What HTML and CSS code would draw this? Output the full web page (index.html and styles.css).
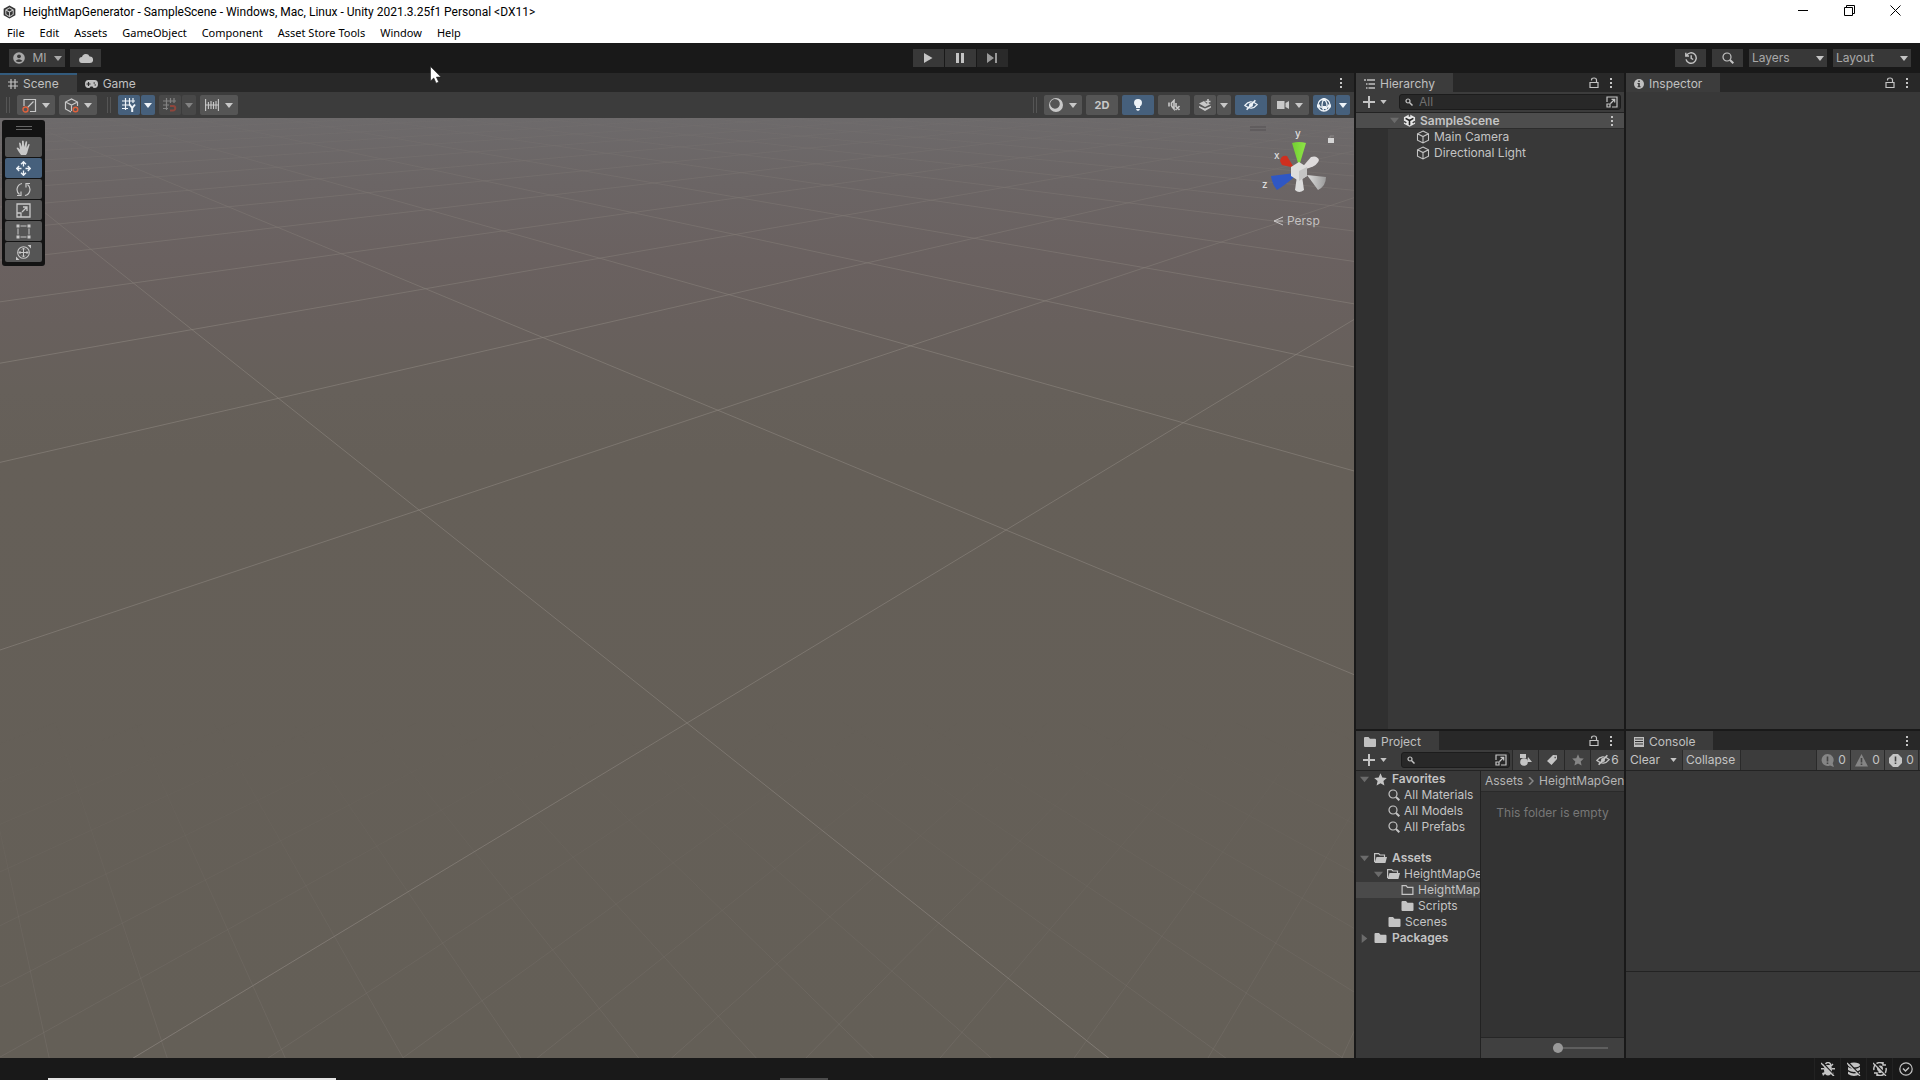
FILE: index.html
```html
<!DOCTYPE html>
<html lang="en">
<head>
<meta charset="utf-8">
<title>HeightMapGenerator - SampleScene</title>
<link rel="stylesheet" href="styles.css">
</head>
<body>
<svg class="sprite" aria-hidden="true">
  <symbol id="caret" viewBox="0 0 8 5"><path d="M0 0h8L4 5z" fill="currentColor"/></symbol>
  <symbol id="kebab" viewBox="0 0 4 12"><path d="M1 1h2v2H1zM1 5h2v2H1zM1 9h2v2H1z" fill="currentColor"/></symbol>
  <symbol id="lock" viewBox="0 0 10 12"><path d="M1 5.500h8v5H1zM2.500 3.500V3q0-2 2.500-2T7.500 3v2.500" fill="none" stroke="currentColor" stroke-width="1.200"/></symbol>
  <symbol id="cube" viewBox="0 0 14 14"><path d="M7 1l5.500 2.800v6.400L7 13l-5.500-2.800V3.800zM1.500 3.800L7 6.600l5.500-2.800M7 6.600V13" fill="none" stroke="currentColor" stroke-width="1.100"/></symbol>
  <symbol id="search" viewBox="0 0 12 12"><circle cx="5" cy="5" r="4" fill="none" stroke="currentColor" stroke-width="1.200"/><path d="M8 8l3.300 3.300" stroke="currentColor" stroke-width="2"/></symbol>
  <symbol id="mini-search" viewBox="0 0 8 8"><circle cx="3" cy="3" r="2" fill="none" stroke="currentColor" stroke-width="1.200"/><path d="M4.500 4.500l3 3" stroke="currentColor" stroke-width="1.500"/></symbol>
  <symbol id="plus" viewBox="0 0 12 12"><path d="M6 0v12M0 6h12" stroke="currentColor" stroke-width="2"/></symbol>
  <symbol id="pop" viewBox="0 0 12 12"><path d="M1 6V1h10v10H6M1 8h3v3H1zM4.500 7.500l4-4M5.500 3.300h3.200v3.200" fill="none" stroke="currentColor" stroke-width="1.200"/></symbol>
  <symbol id="folder" viewBox="0 0 12 10"><path d="M0 1q0-1 1-1h3.500L6 1.800h5q1 0 1 1V9q0 1-1 1H1q-1 0-1-1z" fill="currentColor"/></symbol>
  <symbol id="folder-line" viewBox="0 0 12 10"><path d="M.6.600h4L6 2.300h5.400v7H.600z" fill="none" stroke="currentColor" stroke-width="1.200"/></symbol>
  <symbol id="folder-open" viewBox="0 0 13 10"><path d="M.6 9V.6h4L6 2h4.500v2" fill="none" stroke="currentColor" stroke-width="1.200"/><path d="M2.500 4H13l-1.600 6H.6z" fill="currentColor"/></symbol>
  <symbol id="star" viewBox="0 0 12 12"><path d="M6 .3l1.700 3.900 4.100.4-3.100 2.800.9 4.200L6 9.400l-3.600 2.200.9-4.200L.2 4.600l4.100-.4z" fill="currentColor"/></symbol>
  <symbol id="eye-off" viewBox="0 0 16 12"><path d="M1 6.500Q7-1 15 5.500 9 13 1 6.500z" fill="none" stroke="currentColor" stroke-width="1.500"/><circle cx="8" cy="6" r="2.300" fill="currentColor"/><path d="M13 .5L3 11.500" stroke="currentColor" stroke-width="1.800"/></symbol>
  <symbol id="unity" viewBox="0 0 14 14"><path d="M7 .3l6 3.300v6.800l-6 3.300-6-3.300V3.600z" fill="#e6e6e6"/><path d="M7 7v5M7 7L2.800 4.700M7 7l4.200-2.300" fill="none" stroke="#222" stroke-width="1.700"/><path d="M7 0v3M1 8l2.600 1.500M13 8l-2.600 1.500" stroke="#444" stroke-width="1.700"/></symbol>
</svg>

<header class="titlebar">
  <div class="title-row">
    <svg class="app-icon" viewBox="0 0 14 14"><path d="M7 0l6.300 3.500v7L7 14 .7 10.500v-7z" fill="#333"/><path d="M7 7v5M7 7L3 4.700M7 7l4-2.300M3 9.500V5l4-2.500L11 5v4.500L7 12z" fill="none" stroke="#c8c8c8" stroke-width="1.100"/></svg>
    <h1>HeightMapGenerator - SampleScene - Windows, Mac, Linux - Unity 2021.3.25f1 Personal &lt;DX11&gt;</h1>
    <div class="window-buttons">
      <button aria-label="Minimize"><svg viewBox="0 0 11 11"><path d="M0 5.500h10" stroke="#000"/></svg></button>
      <button aria-label="Restore"><svg viewBox="0 0 11 11"><path d="M.5 2.500h8v8h-8zM2.500 2V.5h8v8H9" fill="none" stroke="#000"/></svg></button>
      <button aria-label="Close"><svg viewBox="0 0 11 11"><path d="M.5.500l10 10M10.500.500l-10 10" stroke="#000"/></svg></button>
    </div>
  </div>
  <nav class="menu">
    <button>File</button><button>Edit</button><button>Assets</button><button>GameObject</button><button>Component</button><button>Asset Store Tools</button><button>Window</button><button>Help</button>
  </nav>
</header>

<div class="main-toolbar">
  <div class="side">
    <button class="tool account"><svg class="i12" viewBox="0 0 12 12"><circle cx="6" cy="6" r="5.800" fill="currentColor"/><circle cx="6" cy="4.300" r="1.900" fill="#383838"/><path d="M2.500 9q3.500-3.500 7 0-3.500 2-7 0z" fill="#383838"/></svg><span>MI</span><svg class="caret"><use href="#caret"/></svg></button>
    <button class="tool w31" aria-label="Cloud"><svg class="cloud" viewBox="0 0 14 10"><path d="M3.200 10a3 3 0 0 1-.2-6 4 4 0 0 1 7.600-.6A3.300 3.300 0 0 1 11 10z" fill="currentColor"/></svg></button>
  </div>
  <div class="play">
    <button class="tool" aria-label="Play"><svg class="i10" viewBox="0 0 10 10"><path d="M1 0l8.500 5L1 10z" fill="currentColor"/></svg></button>
    <button class="tool" aria-label="Pause"><svg class="i10" viewBox="0 0 10 10"><path d="M1 0h3v10H1zM6 0h3v10H6z" fill="currentColor"/></svg></button>
    <button class="tool off" aria-label="Step" disabled><svg class="i10" viewBox="0 0 10 10"><path d="M0 0l7 5-7 5zM8 0h2v10H8z" fill="currentColor"/></svg></button>
  </div>
  <div class="side end">
    <button class="tool w31" aria-label="Undo history"><svg class="i12" viewBox="0 0 12 12"><path d="M1.500 3.500A5.200 5.200 0 1 1 1 7.300M.8.800v3.200H4M6.200 3.300v3l2 1.200" fill="none" stroke="currentColor" stroke-width="1.400"/></svg></button>
    <button class="tool w31" aria-label="Search"><svg class="i12"><use href="#search"/></svg></button>
    <label class="pick"><select aria-label="Layers"><option>Layers</option></select><svg class="caret"><use href="#caret"/></svg></label>
    <label class="pick"><select aria-label="Layout"><option>Layout</option></select><svg class="caret"><use href="#caret"/></svg></label>
  </div>
</div>

<main class="workspace">
  <section class="scene panel">
    <div class="tabs">
      <button class="tab active focused"><svg class="i10" viewBox="0 0 10 10"><path d="M3 0v10M7 0v10M0 3h10M0 7h10" stroke="currentColor" stroke-width="1.200"/></svg>Scene</button>
      <button class="tab"><svg class="pad" viewBox="0 0 13 8"><path d="M3.500 0h6a3.500 4 0 0 1 0 8Q8 8 7.500 6.500h-2Q5 8 3.500 8a3.500 4 0 0 1 0-8z" fill="currentColor"/><path d="M3.500 2v4M1.500 4h4M8.500 3h1.500M9.500 5H11" stroke="#282828" stroke-width="1.200"/></svg>Game</button>
      <button class="icon-btn push" aria-label="More"><svg class="kebab"><use href="#kebab"/></svg></button>
    </div>
    <div class="scene-toolbar">
      <span class="grip"></span>
      <button class="sbtn w38" aria-label="Pivot"><svg class="i15" viewBox="0 0 15 15"><path d="M2 8V1.500h11.500V13.500H8M5 10L11.500 3.500" fill="none" stroke="currentColor" stroke-width="1.200"/><circle cx="3.500" cy="11.500" r="2.500" fill="none" stroke="#e0623d" stroke-width="1.400"/></svg><svg class="caret"><use href="#caret"/></svg></button>
      <button class="sbtn w38" aria-label="Handle space"><svg class="i15" viewBox="0 0 15 15"><path d="M7 14l-5.500-3V4L7.500 1l6 3v4M1.500 4l6 3 6-3M7.500 7v6" fill="none" stroke="currentColor" stroke-width="1.200"/><circle cx="11.500" cy="11.500" r="2.300" fill="none" stroke="#e0623d" stroke-width="1.400"/></svg><svg class="caret"><use href="#caret"/></svg></button>
      <span class="grip second"></span>
      <span class="split"><button class="sbtn on w22" aria-label="Grid"><svg class="i14" viewBox="0 0 14 14"><path d="M3.500 0v12M7.500 0v7M11 0v5M0 3h13M0 7h8M0 10.500h6" stroke="currentColor" stroke-width="1.200"/><path d="M7.500 6.500l2.700 3.500v4M13 6.500L10.200 10" fill="none" stroke="currentColor" stroke-width="2"/></svg></button><button class="sbtn on w14" aria-label="Grid options"><svg class="caret"><use href="#caret"/></svg></button></span>
      <span class="split dim"><button class="sbtn w22" aria-label="Snap"><svg class="i14" viewBox="0 0 14 14"><path d="M3.500 0v12M7.500 0v5M11 0v5M0 3h13M0 7h6M0 10.500h5" stroke="currentColor" stroke-width="1.200"/><path d="M7 8h3a2 2 0 0 1 0 4.500H7" fill="none" stroke="#e0513d" stroke-width="2"/></svg></button><button class="sbtn w14" aria-label="Snap options"><svg class="caret"><use href="#caret"/></svg></button></span>
      <button class="sbtn w38" aria-label="Snap increment"><svg class="i14" viewBox="0 0 14 14"><path d="M.6 1v12M3.400 4v7M6 3v8M8.500 4v7M11 3v8M13.400 1v12M0 7h14" stroke="currentColor" stroke-width="1.100"/></svg><svg class="caret"><use href="#caret"/></svg></button>
      <span class="grip push"></span>
      <button class="sbtn w38" aria-label="Draw mode"><svg class="i14" viewBox="0 0 14 14"><path d="M7 0a7 7 0 1 0 0 14A7 7 0 0 0 7 0zM8 1.500A4.800 4.800 0 1 1 2 8.500 4.800 4.800 0 0 1 8 1.500z" fill="currentColor" fill-rule="evenodd"/></svg><svg class="caret"><use href="#caret"/></svg></button>
      <button class="sbtn w32 bold">2D</button>
      <button class="sbtn on w32" aria-label="Lighting"><svg class="i12" viewBox="0 0 12 12"><path d="M6 0a4 4 0 0 1 4 4q0 2-2 3.500V9H4V7.500Q2 6 2 4a4 4 0 0 1 4-4zM4.300 10h3.400v1L6 12l-1.700-1z" fill="currentColor"/></svg></button>
      <button class="sbtn w32" aria-label="Audio"><svg class="i12" viewBox="0 0 12 12"><path d="M1 3.500v4M3.500 7V4L6 1.500V10L3.500 7M8 4v3M7.500 7l4 4M11.500 7l-4 4" fill="none" stroke="currentColor" stroke-width="1.600"/></svg></button>
      <span class="split"><button class="sbtn w22" aria-label="Effects"><svg class="i12" viewBox="0 0 12 12"><path d="M0 4.500L5 2l2.500 2.500L12 5 6 8zM0 7l6 2.500L12 7v1.500L6 12 0 8.500z" fill="currentColor"/><path d="M9 0v5M6.500 2.500h5" stroke="currentColor" stroke-width="1.600"/></svg></button><button class="sbtn w14" aria-label="Effect options"><svg class="caret"><use href="#caret"/></svg></button></span>
      <button class="sbtn on w32" aria-label="Hidden objects"><svg class="eye"><use href="#eye-off"/></svg></button>
      <button class="sbtn w38" aria-label="Camera"><svg class="i12" viewBox="0 0 12 12"><path d="M0 2h7.500v8H0zM8.500 4L12 2v8L8.500 8z" fill="currentColor"/></svg><svg class="caret"><use href="#caret"/></svg></button>
      <span class="split"><button class="sbtn on w22" aria-label="Gizmos"><svg class="i14" viewBox="0 0 14 14"><circle cx="7" cy="7" r="6" fill="none" stroke="currentColor" stroke-width="1.300"/><path d="M7 1q-4 6 0 12M7 1q5 5 2 11M1 8q6 3 12 0" fill="none" stroke="currentColor" stroke-width="1.200"/><path d="M5.500 0h3v3h-3zM0 6.500h3v3H0zM11 6.500h3v3h-3zM6 8h3v3H6z" fill="currentColor"/></svg></button><button class="sbtn on w14" aria-label="Gizmo options"><svg class="caret"><use href="#caret"/></svg></button></span>
    </div>
    <div class="viewport">
      <svg class="grid" id="grid" viewBox="0 118 1354 940" preserveAspectRatio="xMinYMin slice">
        <defs>
          <linearGradient id="far" gradientUnits="userSpaceOnUse" x1="0" y1="118" x2="0" y2="340"><stop offset="0" stop-color="#fff" stop-opacity=".1"/><stop offset=".4" stop-color="#fff" stop-opacity=".55"/><stop offset="1" stop-color="#fff"/></linearGradient>
          <linearGradient id="near" gradientUnits="userSpaceOnUse" x1="0" y1="720" x2="0" y2="1058"><stop offset="0" stop-color="#fff" stop-opacity="0"/><stop offset="1" stop-color="#fff"/></linearGradient>
          <mask id="far-mask" maskUnits="userSpaceOnUse" x="0" y="118" width="1354" height="940"><rect y="118" width="1354" height="940" fill="url(#far)"/></mask>
          <mask id="near-mask" maskUnits="userSpaceOnUse" x="0" y="118" width="1354" height="940"><rect y="720" width="1354" height="338" fill="url(#near)"/></mask>
        </defs>
        <g mask="url(#far-mask)"><path id="major" class="major"/></g>
        <g mask="url(#near-mask)"><path id="minor" class="minor"/></g>
      </svg>
      <div class="toolbox">
        <span class="handle"></span>
        <button class="sbtn" aria-label="Hand"><svg class="i15" viewBox="0 0 15 15"><path d="M5 15Q2 11 .5 8q1-1 2 0L4 9.500 3 3q.8-1 1.500 0L6 7 6 1q.9-1 1.700 0L8.200 7 9.700 1.500q1-.8 1.500.2L10.500 8l2-4q1-.4 1.200.6L12 10q-.5 3-2 5z" fill="currentColor"/></svg></button>
        <button class="sbtn on" aria-label="Move"><svg class="i15" viewBox="0 0 15 15"><path d="M7.500 1v4.500M7.500 9.500V14M1 7.500h4.500M9.500 7.500H14M5 3.200L7.500.700 10 3.200M5 11.800l2.500 2.500 2.500-2.500M3.200 5L.7 7.500 3.200 10M11.800 5l2.500 2.500-2.500 2.500" fill="none" stroke="currentColor" stroke-width="1.300"/></svg></button>
        <button class="sbtn" aria-label="Rotate"><svg class="i15" viewBox="0 0 15 15"><path d="M6 1.500A6.200 6.200 0 0 0 3.500 12.500M1 13.500h4V9.500M9 13.500A6.200 6.200 0 0 0 11.500 2.500M14 1.500h-4v4" fill="none" stroke="currentColor" stroke-width="1.200"/></svg></button>
        <button class="sbtn" aria-label="Scale"><svg class="i15" viewBox="0 0 15 15"><path d="M1 1h13v13H1zM1 10h4v4M6 9l4.500-4.500M7 4h4v4" fill="none" stroke="currentColor" stroke-width="1.300"/></svg></button>
        <button class="sbtn" aria-label="Rect"><svg class="i15" viewBox="0 0 15 15"><path d="M2 4.500v6M13 4.500v6M4.500 2h6M4.500 13h6" stroke="currentColor"/><path d="M.5.500h3v3h-3zM11.500.5h3v3h-3zM.5 11.500h3v3h-3zM11.500 11.500h3v3h-3z" fill="currentColor"/></svg></button>
        <button class="sbtn" aria-label="Transform"><svg class="i15" viewBox="0 0 15 15"><circle cx="7.500" cy="7.500" r="5.800" fill="none" stroke="currentColor" stroke-width="1.100"/><path d="M7.500 3v9M3 7.500h9M6 4.500l1.500-1.500L9 4.500M6 10.500L7.500 12 9 10.500M4.500 6L3 7.500 4.500 9M10.500 6L12 7.500 10.500 9" fill="none" stroke="currentColor" stroke-width="1"/><path d="M11.500 0H15v3.500zM0 11.500V15h3.500z" fill="currentColor"/></svg></button>
      </div>
      <div class="orientation">
        <svg viewBox="0 0 96 116" role="img" aria-label="Scene orientation">
          <defs>
            <linearGradient id="cone-g"><stop offset="0" stop-color="#73cf31"/><stop offset="1" stop-color="#8ee548"/></linearGradient>
            <linearGradient id="cone-w"><stop offset="0" stop-color="#ddd"/><stop offset="1" stop-color="#999"/></linearGradient>
          </defs>
          <path d="M0 2h16M0 5h16" stroke="#555152"/>
          <path d="M43 41l-6-10q-6-1-7 5l2 4 9 2z" fill="#cf2f1f"/>
          <path d="M49 46l12-14q6-2 8 3-1 5-10 8z" fill="#dedbdc"/>
          <path d="M57 50l19 2q0 9-8 13z" fill="url(#cone-w)"/>
          <path d="M45 48L21 51q1 8 6 14 11-7 18-14z" fill="#2f57c4"/>
          <path d="M47 51h5l2 14q-5 4-9 0z" fill="#dcdcdc"/>
          <path d="M42 18q7-2 14 0l-6 20h-2z" fill="url(#cone-g)"/>
          <path d="M49 37l8 5v9l-8 5-8-5v-9z" fill="#ddd"/><path d="M49 46l8-4v9l-8 5z" fill="#c5c5c5"/>
          <path d="M78 13h6v5h-6z" fill="#d5d5d5"/><path d="M80 13v-2h4" stroke="#8b8888" fill="none"/>
          <path d="M33 92l-9 4 9 4M24 96h9" fill="none" stroke="#c9c6c6"/>
          <text x="45" y="12">y</text><text x="24" y="34">x</text><text x="12" y="63">z</text>
          <text class="persp" x="37" y="100">Persp</text>
        </svg>
      </div>
    </div>
  </section>

  <section class="hierarchy panel">
    <div class="tabs">
      <button class="tab active"><svg class="i11" viewBox="0 0 11 10"><path d="M0 1h2M3 1h8M2 5h1.500M4.500 5H11M2 9h1.500M4.500 9H11" stroke="currentColor" stroke-width="1.300"/></svg>Hierarchy</button>
      <button class="icon-btn push" aria-label="Lock"><svg class="lock"><use href="#lock"/></svg></button>
      <button class="icon-btn" aria-label="More"><svg class="kebab"><use href="#kebab"/></svg></button>
    </div>
    <div class="panel-toolbar">
      <button class="add" aria-label="Add"><svg class="i12"><use href="#plus"/></svg><svg class="caret small"><use href="#caret"/></svg></button>
      <label class="search wide"><svg class="i8"><use href="#mini-search"/></svg><input type="text" placeholder="All" aria-label="Search hierarchy"><svg class="i12"><use href="#pop"/></svg></label>
    </div>
    <ul class="objects">
      <li class="root"><svg class="fold"><use href="#caret"/></svg><svg class="i13"><use href="#unity"/></svg><b>SampleScene</b><button class="icon-btn push" aria-label="Scene menu"><svg class="kebab"><use href="#kebab"/></svg></button></li>
      <li><svg class="i14"><use href="#cube"/></svg>Main Camera</li>
      <li><svg class="i14"><use href="#cube"/></svg>Directional Light</li>
    </ul>
  </section>

  <section class="inspector panel">
    <div class="tabs">
      <button class="tab active"><svg class="i10" viewBox="0 0 10 10"><circle cx="5" cy="5" r="5" fill="currentColor"/><path d="M4.200 1.500h1.600v1.600H4.200zM3.500 4h2.300v3.200h.8v1H3.500v-1h.7V5h-.7z" fill="#383838"/></svg>Inspector</button>
      <button class="icon-btn push" aria-label="Lock"><svg class="lock"><use href="#lock"/></svg></button>
      <button class="icon-btn" aria-label="More"><svg class="kebab"><use href="#kebab"/></svg></button>
    </div>
  </section>

  <section class="project panel">
    <div class="tabs">
      <button class="tab active"><svg class="folder"><use href="#folder"/></svg>Project</button>
      <button class="icon-btn push" aria-label="Lock"><svg class="lock"><use href="#lock"/></svg></button>
      <button class="icon-btn" aria-label="More"><svg class="kebab"><use href="#kebab"/></svg></button>
    </div>
    <div class="panel-toolbar">
      <button class="add" aria-label="Add"><svg class="i12"><use href="#plus"/></svg><svg class="caret small"><use href="#caret"/></svg></button>
      <label class="search"><svg class="i8"><use href="#mini-search"/></svg><input type="text" aria-label="Search project"><svg class="i12"><use href="#pop"/></svg></label>
      <button class="seg" aria-label="Filter by type"><svg class="i12" viewBox="0 0 12 12"><path d="M0 0h6v4H0zM8 3l4 5H7z" fill="currentColor"/><circle cx="4" cy="8" r="3.800" fill="currentColor"/></svg></button>
      <button class="seg" aria-label="Filter by label"><svg class="i10" viewBox="0 0 10 10"><path d="M6 0l4 .2V4L4.500 10 0 6zM7.500 1.700v1.500h1.300V1.700z" fill="currentColor" fill-rule="evenodd"/></svg></button>
      <button class="seg faded" aria-label="Favorite"><svg class="i12"><use href="#star"/></svg></button>
      <button class="seg last" aria-label="Hidden packages"><svg class="eye"><use href="#eye-off"/></svg>6</button>
    </div>
    <div class="project-body">
      <ul class="tree">
        <li><svg class="fold"><use href="#caret"/></svg><svg class="i13"><use href="#star"/></svg><b>Favorites</b></li>
        <li class="l1"><svg class="i12"><use href="#search"/></svg>All Materials</li>
        <li class="l1"><svg class="i12"><use href="#search"/></svg>All Models</li>
        <li class="l1"><svg class="i12"><use href="#search"/></svg>All Prefabs</li>
        <li class="group"><svg class="fold"><use href="#caret"/></svg><svg class="folder"><use href="#folder-open"/></svg><b>Assets</b></li>
        <li class="l1 open"><svg class="fold"><use href="#caret"/></svg><svg class="folder"><use href="#folder-open"/></svg>HeightMapGenerator</li>
        <li class="l2 selected"><svg class="folder"><use href="#folder-line"/></svg>HeightMaps</li>
        <li class="l2"><svg class="folder"><use href="#folder"/></svg>Scripts</li>
        <li class="l1"><svg class="folder"><use href="#folder"/></svg>Scenes</li>
        <li><svg class="fold closed"><use href="#caret"/></svg><svg class="folder"><use href="#folder"/></svg><b>Packages</b></li>
      </ul>
      <div class="files">
        <nav class="crumbs"><a href="#assets">Assets</a><svg class="chev" viewBox="0 0 6 8"><path d="M1 0l4 4-4 4" fill="none" stroke="currentColor" stroke-width="1.500"/></svg><a href="#generator">HeightMapGenerator</a></nav>
        <p>This folder is empty</p>
        <footer><input type="range" min="0" max="100" value="0" aria-label="Icon size"></footer>
      </div>
    </div>
  </section>

  <section class="console panel">
    <div class="tabs">
      <button class="tab active"><svg class="i10" viewBox="0 0 10 10"><path d="M0 0h10v10H0z" fill="currentColor"/><path d="M1 2h8M1 4.500h8M1 7h8" stroke="#333"/></svg>Console</button>
      <button class="icon-btn push" aria-label="More"><svg class="kebab"><use href="#kebab"/></svg></button>
    </div>
    <div class="panel-toolbar">
      <button class="clear">Clear</button><button class="clear-menu" aria-label="Clear options"><svg class="caret small"><use href="#caret"/></svg></button>
      <button class="lit collapse">Collapse</button>
      <div class="counts">
        <button class="lit count"><svg class="i13 faded" viewBox="0 0 13 13"><path d="M6.500 0a6 6 0 0 1 5.200 9.200L13 13l-4-1.500A6 6 0 1 1 6.500 0z" fill="currentColor"/><path d="M6.500 2.500v5M6.500 8.500v1.500" stroke="#444" stroke-width="1.600"/></svg>0</button>
        <button class="lit count"><svg class="i13 faded" viewBox="0 0 13 13"><path d="M6.500 0L13 12.500H0z" fill="currentColor"/><path d="M6.500 4v4.500M6.500 9.500V11" stroke="#444" stroke-width="1.600"/></svg>0</button>
        <button class="lit count"><svg class="i13" viewBox="0 0 13 13"><path d="M4 0h5l4 4v5l-4 4H4L0 9V4z" fill="currentColor"/><path d="M6.500 2.500v5M6.500 8.500v1.500" stroke="#444" stroke-width="1.600"/></svg>0</button>
      </div>
    </div>
    <div class="log"></div>
    <div class="detail"></div>
  </section>
</main>

<footer class="status">
  <button aria-label="Debugger"><svg class="i14" viewBox="0 0 14 14"><path d="M4.500 2q2.500-3 5 0v1.500h1L12 2M2 2l1.500 1.500" fill="none" stroke="currentColor" stroke-width="1.400"/><path d="M4 3h6q2 5 0 9-3 3-6 0-2-4 0-9zM0 6h3v1.500H0zM11 6h3v1.500h-3zM1 11l3-1v2l-2 2zM13 11l-3-1v2l2 2z" fill="currentColor"/><path d="M2 1l12 13" stroke="#191919" stroke-width="1.500"/><path d="M0 1l13 13" stroke="currentColor" stroke-width="1.300"/></svg></button>
  <button aria-label="Cache server"><svg class="i14" viewBox="0 0 14 14"><ellipse cx="7" cy="3" rx="6" ry="2.600" fill="currentColor"/><path d="M1 5q6 4 12 0v3q-6 4-12 0zM1 9.500q6 4 12 0V12q-6 4-12 0z" fill="currentColor"/><path d="M2 1l12 13" stroke="#191919" stroke-width="1.500"/><path d="M0 1l13 13" stroke="currentColor" stroke-width="1.300"/></svg></button>
  <button aria-label="Auto lighting"><svg class="i14" viewBox="0 0 14 14"><path d="M1 8A6 6 0 0 1 10 1.500M13 6a6 6 0 0 1-9 6.500M10 0v3h3M4 14v-3H1" fill="none" stroke="currentColor" stroke-width="1.500"/><circle cx="7" cy="6.500" r="3" fill="currentColor"/><path d="M5.500 9h3v2h-3z" fill="currentColor"/><path d="M2 1l12 13" stroke="#191919" stroke-width="1.500"/><path d="M0 1l13 13" stroke="currentColor" stroke-width="1.300"/></svg></button>
  <button aria-label="Progress"><svg class="i14" viewBox="0 0 14 14"><circle cx="7" cy="7" r="6.200" fill="none" stroke="currentColor" stroke-width="1.200"/><path d="M4 6.500l2.500 2.500L10 5.500" fill="none" stroke="currentColor" stroke-width="1.400"/></svg></button>
  <span class="strip window"></span><span class="strip app"></span>
</footer>
<svg class="pointer" viewBox="0 0 12 18" aria-hidden="true"><path d="M.5.500v14.500l3.300-3 2.300 5.200 2.600-1.100-2.300-5H11z" fill="#fff" stroke="#222" stroke-width=".6"/></svg>
<script src="grid.js"></script>
</body>
</html>
```
FILE: styles.css
```css
* { box-sizing: border-box; }
body {
  margin: 0; height: 100vh; overflow: hidden; display: flex; flex-direction: column;
  background: #191919; color: #c4c4c4; font: 12px/16px Inter, "Liberation Sans", sans-serif;
}
button, input, select { font: inherit; color: inherit; margin: 0; padding: 0; border: 0; background: none; border-radius: 0; }
ul { list-style: none; margin: 0; padding: 0; }
svg { flex: none; display: block; }
b { font-weight: 600; }
.sprite { position: absolute; width: 0; height: 0; }
.push { margin-left: auto; }
.i8 { width: 8px; height: 8px; }
.i10 { width: 10px; height: 10px; }
.i11 { width: 11px; height: 10px; }
.i12 { width: 12px; height: 12px; }
.i13 { width: 13px; height: 13px; }
.i14 { width: 14px; height: 14px; }
.i15 { width: 15px; height: 15px; }
.caret { width: 8px; height: 5px; }
.caret.small { width: 7px; height: 4px; }
.kebab { width: 4px; height: 12px; }
.lock { width: 10px; height: 12px; }
.folder { width: 13px; height: 10px; }
.eye { width: 14px; height: 12px; }
.faded { color: #858585; }

/* Window frame */
.titlebar { background: #fff; color: #000; height: 43px; flex: none; font: 11px/16px "Noto Sans", sans-serif; }
.title-row { display: flex; align-items: center; height: 23px; padding: 0 2px 0 3px; gap: 7px; }
.title-row h1 { margin: 0; font: 12px/16px Roboto, "Noto Sans", sans-serif; white-space: nowrap; }
.app-icon { width: 13px; height: 14px; }
.window-buttons { display: flex; margin-left: auto; height: 20px; align-self: flex-start; }
.window-buttons button { width: 46px; display: grid; place-items: center; }
.window-buttons svg { width: 11px; height: 11px; }
.menu { display: flex; height: 20px; gap: 15px; padding-left: 7px; }
.menu button { height: 19px; line-height: 19px; }

/* Main toolbar */
.main-toolbar { display: grid; grid-template-columns: 1fr auto 1fr; align-items: center; height: 30px; flex: none; padding: 0 9px; }
.side { display: flex; gap: 5px; }
.side.end { justify-content: flex-end; gap: 6px; }
.play { display: flex; gap: 1px; }
.tool { height: 18px; display: flex; align-items: center; justify-content: center; background: #383838; }
.play .tool { width: 31px; }
.tool.off { background: #2a2a2a; color: #999; }
.account { width: 56px; justify-content: space-between; padding: 0 3px 0 4px; color: #a9a9a9; }
.w31 { width: 31px; }
.cloud { width: 14px; height: 10px; }
.pick { position: relative; width: 78px; height: 18px; background: #383838; }
.pick select { appearance: none; width: 100%; height: 18px; padding-left: 3px; color: #a9a9a9; outline: 0; }
.pick .caret { position: absolute; right: 3px; top: 7px; pointer-events: none; }

/* Workspace */
.workspace {
  flex: 1; min-height: 0; display: grid; gap: 2px;
  grid-template: "scene hierarchy inspector" 656fr "scene project console" 327fr / minmax(0, 1354fr) minmax(0, 268fr) minmax(0, 294fr);
}
.scene { grid-area: scene; }
.hierarchy { grid-area: hierarchy; }
.inspector { grid-area: inspector; }
.project { grid-area: project; }
.console { grid-area: console; }
.panel { background: #383838; display: flex; flex-direction: column; min-width: 0; min-height: 0; overflow: hidden; }
.tabs { display: flex; height: 19px; flex: none; background: #282828; padding-right: 5px; }
.tab { display: flex; align-items: center; gap: 5px; padding: 2px 18px 0 8px; color: #c0c0c0; }
.tab.active { background: #3c3c3c; }
.tab.focused { box-shadow: inset 0 2px #335b7d; }
.tab .folder { width: 12px; }
.pad { width: 13px; height: 8px; }
.icon-btn { display: grid; place-items: center; width: 17px; height: 19px; }
.panel-toolbar { display: flex; align-items: center; height: 21px; flex: none; background: #3c3c3c; border-bottom: 1px solid #232323; }
.add { display: flex; align-items: center; gap: 5px; width: 43px; padding-left: 7px; }
.search { display: flex; align-items: center; gap: 5px; flex: 1; min-width: 0; height: 16px; margin: 0 2px; padding: 0 2px 0 5px; background: #282828; border: 1px solid #1c1c1c; border-radius: 3px; }
.search.wide { margin: 0 3px 0 0; gap: 6px; }
.search input { flex: 1; min-width: 0; width: 0; height: 14px; outline: 0; }
.search input::placeholder { color: #707070; opacity: 1; }

/* Scene view */
.scene-toolbar { display: flex; align-items: center; gap: 4px; height: 26px; flex: none; padding: 0 4px 0 6px; background: #3c3c3c; }
.grip { width: 4px; height: 16px; border: solid #555; border-width: 0 1px; margin-right: 3px; }
.grip.second { margin: 0 3px 0 6px; }
.sbtn { height: 20px; display: flex; align-items: center; justify-content: space-evenly; background: #555; color: #c8c8c8; border-radius: 2px; }
.sbtn.on { background: #46607c; color: #eef3f8; }
.split { display: flex; gap: 1px; }
.dim { opacity: .5; }
.bold { font-weight: 700; font-size: 11px; }
.w14 { width: 14px; }
.w22 { width: 22px; }
.w32 { width: 32px; }
.w38 { width: 38px; }
.viewport { position: relative; flex: 1; min-height: 0; background: linear-gradient(#6d6a6b, #6b6565 7%, #6a6160 15%, #68605d 22%, #66605a 29%, #655f58 36%, #645f57); }
.grid { width: 100%; height: 100%; }
.major, .minor { fill: none; stroke: #8c857e; stroke-width: 1; }
.major { stroke-opacity: .6; }
.minor { stroke-opacity: .26; }
.toolbox { position: absolute; left: 2px; top: 2px; width: 43px; padding: 3px 3px 4px; display: flex; flex-direction: column; gap: 1px; background: #131313; border-radius: 3px; }
.toolbox .sbtn { justify-content: center; }
.handle { width: 16px; height: 4px; margin: 3px auto 6px; border: solid #666; border-width: 1px 0; }
.orientation { position: absolute; right: 4px; top: 7px; width: 100px; }
.orientation svg { width: 96px; height: 116px; }
.orientation text { fill: #ddd; font: 500 10px Inter, sans-serif; }
.orientation .persp { fill: #c4c1c1; font: 12px Inter, sans-serif; }

/* Hierarchy */
.objects { flex: 1; background: linear-gradient(90deg, #303030 32px, #383838 32px); }
.objects li { display: flex; align-items: center; gap: 4px; height: 16px; padding-left: 60px; }
.objects .root { padding: 0 4px 0 34px; background: #4d4d4d; gap: 4px; border-bottom: 1px solid #2c2c2c; }
.root .icon-btn { height: 16px; }
.fold { width: 9px; height: 7px; color: #6b6b6b; }
.fold.closed { transform: rotate(-90deg); }

/* Project */
.seg { display: flex; align-items: center; justify-content: center; width: 26px; height: 20px; border-left: 1px solid #282828; background: #404040; }
.seg.last { width: 34px; gap: 1px; }
.project .faded { color: #858585; }
.project-body { flex: 1; min-height: 0; display: grid; grid-template-columns: 125px minmax(0, 1fr); }
.tree { border-right: 1px solid #222; overflow: hidden; white-space: nowrap; }
.tree li { display: flex; align-items: center; height: 16px; padding-left: 4px; gap: 5px; }
.tree .l1 { padding-left: 32px; gap: 4px; }
.tree .l1.open { padding-left: 18px; }
.tree .l2 { padding-left: 45px; gap: 4px; }
.tree .selected { background: #4a4a4a; }
.tree .group { margin-top: 15px; }
.files { display: flex; flex-direction: column; background: #333; min-width: 0; }
.crumbs { display: flex; align-items: center; gap: 5px; height: 21px; padding-left: 4px; background: #3c3c3c; border-bottom: 1px solid #2a2a2a; overflow: hidden; white-space: nowrap; }
.crumbs a { color: #b5b5b5; text-decoration: none; }
.chev { width: 6px; height: 8px; color: #888; }
.files p { flex: 1; margin: 13px 0 0; text-align: center; color: #777; }
.files footer { height: 21px; background: #404040; border-top: 1px solid #262626; display: flex; align-items: center; justify-content: flex-end; padding-right: 16px; }
input[type=range] { appearance: none; width: 55px; height: 11px; }
input[type=range]::-webkit-slider-runnable-track { height: 2px; background: #5e5e5e; }
input[type=range]::-webkit-slider-thumb { appearance: none; width: 10px; height: 10px; margin-top: -4px; border-radius: 50%; background: #999; }

/* Console */
.clear { width: 39px; padding-left: 4px; text-align: left; }
.clear-menu { width: 18px; height: 20px; display: grid; place-items: center; border-right: 1px solid #2a2a2a; }
.lit { height: 20px; background: #4b4b4b; border-right: 1px solid #2a2a2a; }
.collapse { width: 58px; text-align: left; padding-left: 3px; }
.counts { display: flex; margin: 0 1px 0 auto; border-left: 1px solid #2a2a2a; }
.count { width: 34px; display: flex; align-items: center; justify-content: center; gap: 4px; color: #c4c4c4; }
.log { flex: 200; }
.detail { flex: 86; border-top: 1px solid #232323; }

/* Status bar */
.status { position: relative; height: 22px; flex: none; display: flex; justify-content: flex-end; padding-right: 2px; }
.status button { width: 26px; display: grid; place-items: center; border-left: 1px solid #222; }
.strip { position: absolute; bottom: 0; height: 2px; }
.strip.window { left: 48px; width: 288px; background: #e4e4e4; }
.strip.app { left: 780px; width: 48px; background: #4c4c4c; }
.pointer { position: absolute; left: 430px; top: 66px; width: 12px; height: 18px; }
```
FILE: grid.js
```js
// Perspective projection of the ground plane; whole numbers are the major cells.
function project(i, j) {
  const w = 1 + 0.4537 * i + 0.4 * j;
  return [
    ((687 - 77.9 * i + 721.4 * j) / w).toFixed(1),
    ((723 + 18.4 * i + 19 * j) / w).toFixed(1)
  ].join(" ");
}

function lines(from, to, step) {
  let d = "";
  for (let n = from; n <= to; n += step) {
    if (1 + 0.4537 * n > 0.1) {
      d += "M" + project(n, -(0.75 + 0.4537 * n) / 0.4) + "L" + project(n, 400);
    }
    if (1 + 0.4 * n > 0.1) {
      d += "M" + project(-(0.75 + 0.4 * n) / 0.4537, n) + "L" + project(400, n);
    }
  }
  return d;
}

document.getElementById("major").setAttribute("d", lines(0, 36, 1));
document.getElementById("minor").setAttribute("d", lines(-1, 3, 0.1));
```
